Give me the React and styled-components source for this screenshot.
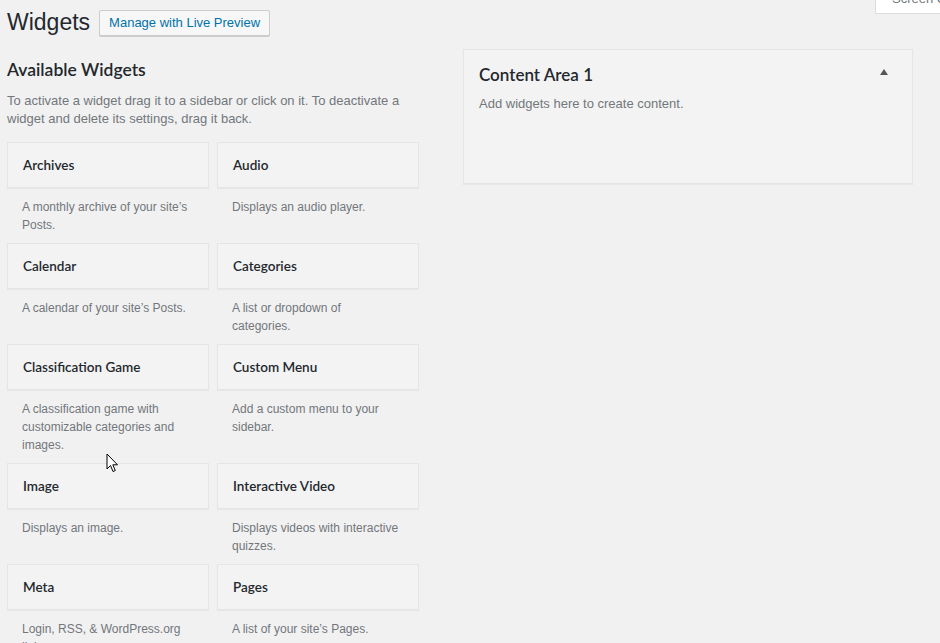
import React from "react";
import styled, { createGlobalStyle } from "styled-components";

const widgets = [
  { title: "Archives", description: "A monthly archive of your site’s\nPosts." },
  { title: "Audio", description: "Displays an audio player." },
  { title: "Calendar", description: "A calendar of your site’s Posts." },
  { title: "Categories", description: "A list or dropdown of\ncategories." },
  {
    title: "Classification Game",
    description: "A classification game with\ncustomizable categories and\nimages.",
  },
  { title: "Custom Menu", description: "Add a custom menu to your\nsidebar." },
  { title: "Image", description: "Displays an image." },
  {
    title: "Interactive Video",
    description: "Displays videos with interactive\nquizzes.",
  },
  { title: "Meta", description: "Login, RSS, & WordPress.org\nlinks." },
  { title: "Pages", description: "A list of your site’s Pages." },
];

const GlobalStyle = createGlobalStyle`
  html, body {
    margin: 0;
    padding: 0;
    background: #f1f1f1;
    height: 643px;
    overflow: hidden;
  }
  body {
    font-family: "Liberation Sans", Arial, sans-serif;
    font-size: 13px;
    color: #444;
  }
`;

export default function App() {
  return (
    <>
      <GlobalStyle />
      <Page>
        <ScreenOptions>Screen Options</ScreenOptions>
        <Header>
          <Title>Widgets</Title>
          <PreviewButton>Manage with Live Preview</PreviewButton>
        </Header>
        <Columns>
          <Available>
            <SectionTitle>Available Widgets</SectionTitle>
            <Intro>
              To activate a widget drag it to a sidebar or click on it. To
              deactivate a widget and delete its settings, drag it back.
            </Intro>
            <WidgetGrid>
              {widgets.map((widget) => (
                <Widget key={widget.title}>
                  <WidgetTop>{widget.title}</WidgetTop>
                  <WidgetDescription>{widget.description}</WidgetDescription>
                </Widget>
              ))}
            </WidgetGrid>
          </Available>
          <Sidebars>
            <SidebarPanel>
              <SidebarHead>
                <SidebarName>Content Area 1</SidebarName>
                <Toggle />
              </SidebarHead>
              <SidebarDescription>
                Add widgets here to create content.
              </SidebarDescription>
            </SidebarPanel>
          </Sidebars>
        </Columns>
        <Cursor width="13" height="21" viewBox="0 0 13 21">
          <path
            d="M1 1 L1 16 L4.5 12.5 L7 18.5 L9.3 17.5 L6.8 11.8 L11.5 11.8 Z"
            fill="#fff"
            stroke="#000"
            strokeWidth="1"
          />
        </Cursor>
      </Page>
    </>
  );
}

const Page = styled.div`
  position: relative;
  width: 940px;
  height: 643px;
  padding-left: 7px;
  box-sizing: border-box;
  overflow: hidden;
`;

const ScreenOptions = styled.div`
  position: absolute;
  top: -8px;
  left: 875px;
  width: 90px;
  height: 22px;
  box-sizing: border-box;
  border: 1px solid #ddd;
  border-top: none;
  background: #fff;
  color: #72777c;
  font-size: 13px;
  line-height: 14px;
  padding: 0 16px;
  white-space: nowrap;
`;

const Header = styled.div`
  display: flex;
  align-items: center;
  gap: 9px;
  padding-top: 8px;
  height: 29px;
`;

const Title = styled.h1`
  margin: 0;
  font-size: 23px;
  font-weight: 400;
  line-height: 29px;
  color: #23282d;
`;

const PreviewButton = styled.button`
  height: 26px;
  box-sizing: border-box;
  padding: 0 9px;
  border: 1px solid #ccc;
  border-radius: 2px;
  background: #f7f7f7;
  box-shadow: 0 1px 0 #ccc;
  color: #0073aa;
  font-family: inherit;
  font-size: 13px;
  font-weight: 400;
  line-height: 24px;
`;

const Columns = styled.div`
  display: flex;
  align-items: flex-start;
  gap: 44px;
  margin-top: 12px;
`;

const Available = styled.div`
  width: 412px;
  flex-shrink: 0;
`;

const SectionTitle = styled.h2`
  margin: 0;
  padding-top: 10px;
  font-family: "Lato", "Liberation Sans", sans-serif;
  font-size: 17.5px;
  font-weight: 600;
  line-height: 22px;
  color: #23282d;
`;

const Intro = styled.p`
  margin: 11px 0 0;
  line-height: 18px;
  color: #72777c;
`;

const WidgetGrid = styled.div`
  display: grid;
  grid-template-columns: 202px 202px;
  column-gap: 8px;
  margin-top: 14px;
`;

const Widget = styled.div`
  display: flex;
  flex-direction: column;
  padding-bottom: 9px;
`;

const WidgetTop = styled.div`
  height: 46px;
  box-sizing: border-box;
  border: 1px solid #e5e5e5;
  background: #f3f3f3;
  box-shadow: 0 1px 1px rgba(0, 0, 0, 0.04);
  padding: 0 15px;
  display: flex;
  align-items: center;
  font-family: "Lato", "Liberation Sans", sans-serif;
  font-size: 13.5px;
  font-weight: 600;
  color: #23282d;
`;

const WidgetDescription = styled.div`
  padding: 10px 10px 0 15px;
  font-size: 12px;
  line-height: 18px;
  color: #72777c;
  white-space: pre-line;
`;

const Sidebars = styled.div`
  width: 450px;
  flex-shrink: 0;
`;

const SidebarPanel = styled.div`
  height: 135px;
  box-sizing: border-box;
  border: 1px solid #e5e5e5;
  background: #f3f3f3;
  box-shadow: 0 1px 1px rgba(0, 0, 0, 0.04);
  padding: 0 15px;
`;

const SidebarHead = styled.div`
  display: flex;
  align-items: center;
  justify-content: space-between;
  padding-top: 14px;
  height: 22px;
`;

const SidebarName = styled.h2`
  margin: 0;
  font-family: "Lato", "Liberation Sans", sans-serif;
  font-size: 17px;
  font-weight: 600;
  line-height: 22px;
  color: #23282d;
`;

const Toggle = styled.span`
  width: 0;
  height: 0;
  margin: -7px 9px 0 0;
  border-left: 4px solid transparent;
  border-right: 4px solid transparent;
  border-bottom: 6px solid #555;
`;

const SidebarDescription = styled.p`
  margin: 9px 0 0;
  line-height: 18px;
  color: #72777c;
`;

const Cursor = styled.svg`
  position: absolute;
  left: 106px;
  top: 453px;
`;
